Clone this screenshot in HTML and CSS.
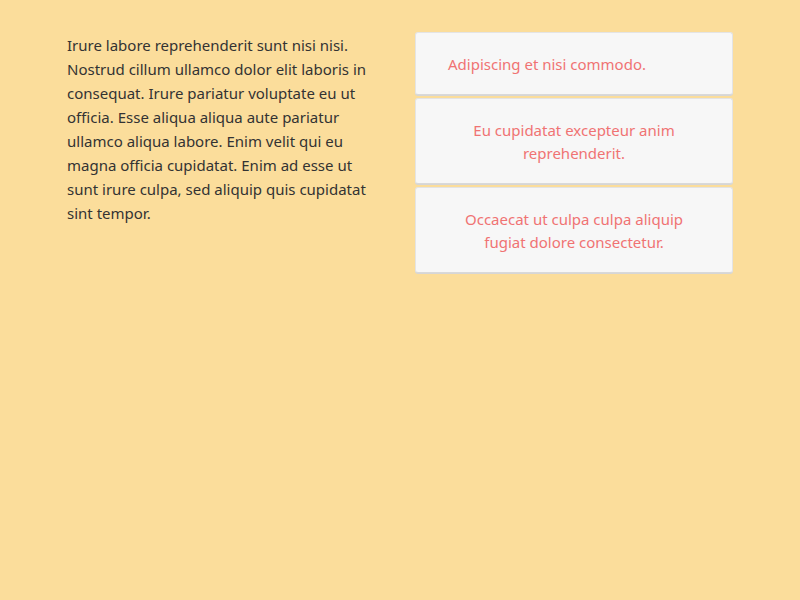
FILE: index.html
```html
<!DOCTYPE html>
<html>
<head>
<meta charset="utf-8">
<link rel="stylesheet" href="styles.css">
</head>
<body>
<div class="wrap">
  <p class="text">Irure labore reprehenderit sunt nisi nisi. Nostrud cillum ullamco dolor elit laboris in consequat. Irure pariatur voluptate eu ut officia. Esse aliqua aliqua aute pariatur ullamco aliqua labore. Enim velit qui eu magna officia cupidatat. Enim ad esse ut sunt irure culpa, sed aliquip quis cupidatat sint tempor.</p>
  <div class="cards">
    <div class="card left">Adipiscing et nisi commodo.</div>
    <div class="card">Eu cupidatat excepteur anim reprehenderit.</div>
    <div class="card">Occaecat ut culpa culpa aliquip fugiat dolore consectetur.</div>
  </div>
</div>
</body>
</html>
```
FILE: styles.css
```css
html, body {
  margin: 0;
  padding: 0;
}
body {
  background: #fbdd9b;
  font-family: "Noto Sans", "Open Sans", sans-serif;
  font-size: 15px;
  line-height: 24px;
  width: 800px;
  height: 600px;
}
.wrap {
  width: 666px;
  margin-left: 67px;
  padding-top: 32px;
  display: grid;
  grid-template-columns: 316px 318px;
  column-gap: 32px;
  align-items: start;
}
.text {
  margin: 1px 0 0;
  color: #333333;
}
.cards {
  display: flex;
  flex-direction: column;
  gap: 3px;
}
.card {
  background: #f7f7f7;
  border: 1px solid #e4e4e4;
  border-bottom-color: #d9d9d9;
  border-radius: 3px;
  box-shadow: 0 1px 0 #d6d6d6;
  padding: 20px 32px 18px;
  line-height: 23px;
  color: #f07373;
  text-align: center;
}
.card.left {
  text-align: left;
}
```
